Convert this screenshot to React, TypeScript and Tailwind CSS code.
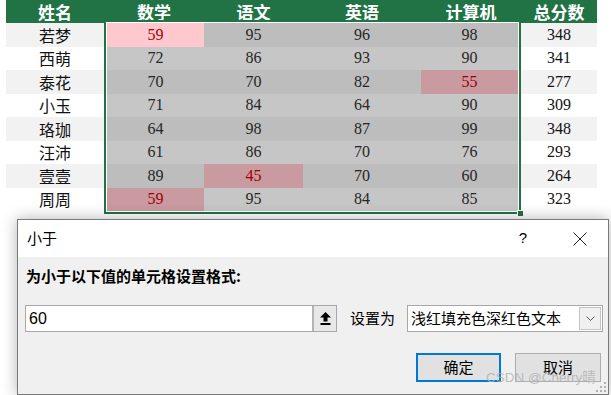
import React from "react";

const cjk = "font-['Noto_Sans_CJK_SC',sans-serif]";
const serif = "font-['Liberation_Serif','Noto_Sans_CJK_SC',serif]";

interface Row {
    name: string;
    scores: number[];
    total: number;
}

const rows: Row[] = [
    { name: "若梦", scores: [59, 95, 96, 98], total: 348 },
    { name: "西萌", scores: [72, 86, 93, 90], total: 341 },
    { name: "泰花", scores: [70, 70, 82, 55], total: 277 },
    { name: "小玉", scores: [71, 84, 64, 90], total: 309 },
    { name: "珞珈", scores: [64, 98, 87, 99], total: 348 },
    { name: "汪沛", scores: [61, 86, 70, 76], total: 293 },
    { name: "壹壹", scores: [89, 45, 70, 60], total: 264 },
    { name: "周周", scores: [59, 95, 84, 85], total: 323 },
];

const colWidths = ["w-[97px]", "w-[99px]", "w-[118px]", "w-[97px]"];

function ScoreCell({ value, col, rowIdx }: { value: number; col: number; rowIdx: number }) {
    const low = value < 60;
    const active = rowIdx === 0 && col === 0;
    let bg = rowIdx % 2 === 0 ? "bg-[#bdbdbd]" : "bg-[#c6c6c6]";
    if (low) bg = active ? "bg-[#ffc7ce]" : "bg-[#c99aa0]";
    return (
        <div
            className={`${colWidths[col]} h-[23.5px] flex items-center justify-center ${bg} ${serif} text-[16px] ${low ? "text-[#9c0006]" : "text-[#262626]"}`}
        >
            {value}
        </div>
    );
}

function Sheet() {
    return (
        <div className="w-[611px] pl-[6px]">
            {/* header */}
            <div className={`flex h-[23px] w-[591px] bg-[#217346] text-white font-bold text-[17px] ${cjk} leading-[23px]`}>
                <div className="w-[98px] text-center">姓名</div>
                <div className="w-[100px] text-center">数学</div>
                <div className="w-[99px] text-center">语文</div>
                <div className="w-[118px] text-center">英语</div>
                <div className="w-[100px] text-center">计算机</div>
                <div className="w-[76px] text-center">总分数</div>
            </div>

            <div className="flex">
                {/* names */}
                <div className={`w-[98px] ${cjk} text-[16px] text-[#111]`}>
                    {rows.map((r, i) => (
                        <div key={r.name} className={`h-[23.5px] flex items-center justify-center ${i % 2 === 0 ? "bg-[#f2f2f2]" : "bg-white"}`}>
                            {r.name}
                        </div>
                    ))}
                </div>

                {/* selected block */}
                <div className="relative -mt-[3px] border-2 border-[#217346]">
                    <div className="border border-white">
                        {rows.map((r, i) => (
                            <div key={r.name} className="flex">
                                {r.scores.map((s, c) => (
                                    <ScoreCell key={c} value={s} col={c} rowIdx={i} />
                                ))}
                            </div>
                        ))}
                    </div>
                    <div className="absolute -right-[5px] -bottom-[5px] w-[7px] h-[7px] bg-[#217346] border border-white" />
                </div>

                {/* totals */}
                <div className={`w-[76px] ${serif} text-[16px] text-[#111]`}>
                    {rows.map((r, i) => (
                        <div key={r.name} className={`h-[23.5px] flex items-center justify-center ${i % 2 === 0 ? "bg-[#f2f2f2]" : "bg-white"}`}>
                            {r.total}
                        </div>
                    ))}
                </div>
            </div>
        </div>
    );
}

function Dialog() {
    return (
        <div className={`relative ml-[17px] mt-[5px] w-[592px] h-[176px] border border-[#7a7a7a] bg-[#f0f0f0] shadow-[0_0_14px_rgba(0,0,0,0.3)] ${cjk} text-black`}>
            {/* title bar */}
            <div className="h-[37px] bg-white flex items-center pl-[9px] pr-[21px]">
                <span className="text-[15px]">小于</span>
                <span className="ml-auto mr-[46px] text-[15px] font-['Liberation_Sans',sans-serif]">?</span>
                <svg width="14" height="14" viewBox="0 0 14 14">
                    <path d="M0.5 0.5 L13.5 13.5 M13.5 0.5 L0.5 13.5" stroke="#222" strokeWidth="1" fill="none" />
                </svg>
            </div>

            <div className="px-[7px]">
                <div className="pt-[9px] pl-px text-[15px] font-bold leading-[20px]">为小于以下值的单元格设置格式:</div>

                <div className="mt-[19px] flex items-center">
                    <div className="flex shrink-0 h-[27px] w-[312px] border border-[#a8a8a8] bg-white">
                        <div className="flex-1 pl-[3px] flex items-center text-[16px] font-['Liberation_Sans',sans-serif]">60</div>
                        <div className="w-[24px] h-full border-l-2 border-[#b4b4b4] bg-[#e8e8e8] flex items-center justify-center">
                            <svg width="11" height="13" viewBox="0 0 11 13">
                                <path d="M5.5 0 L11 5.5 L7.5 5.5 L7.5 9.5 L3.5 9.5 L3.5 5.5 L0 5.5 Z" fill="#000" />
                                <rect x="0.5" y="11" width="10" height="2" fill="#000" />
                            </svg>
                        </div>
                    </div>
                    <span className="ml-[13px] shrink-0 whitespace-nowrap text-[15px]">设置为</span>
                    <div className="ml-[12px] flex shrink-0 h-[27px] w-[196px] border border-[#a8a8a8] bg-white">
                        <div className="flex-1 pl-[3px] flex items-center text-[15px] whitespace-nowrap">浅红填充色深红色文本</div>
                        <div className="w-[22px] my-[1px] mr-[1px] border border-[#c4c4c4] bg-[#f0f0f0] flex items-center justify-center">
                            <svg width="9" height="5" viewBox="0 0 9 5">
                                <path d="M0.5 0.5 L4.5 4.5 L8.5 0.5" stroke="#555" strokeWidth="1" fill="none" />
                            </svg>
                        </div>
                    </div>
                </div>

                <div className="mt-[21px] flex justify-end gap-[14px]">
                    <button className="w-[85px] h-[29px] border-2 border-[#0078d7] bg-[#e1e1e1] text-[15px]">确定</button>
                    <button className="w-[86px] h-[29px] border border-[#adadad] bg-[#e1e1e1] text-[15px]">取消</button>
                </div>
            </div>

            {/* watermark */}
            <div className="absolute left-[468px] top-[150px] text-[13.5px] leading-[16px] text-[#b0b0b0]/80 font-['Liberation_Sans','Noto_Sans_CJK_SC',sans-serif] whitespace-nowrap">
                CSDN @Cherry晴
            </div>

            {/* resize grip */}
            <svg className="absolute right-[2px] bottom-[2px]" width="10" height="10" viewBox="0 0 10 10">
                <rect x="8" y="0" width="2" height="2" fill="#b0b0b0" />
                <rect x="4" y="4" width="2" height="2" fill="#b0b0b0" />
                <rect x="8" y="4" width="2" height="2" fill="#b0b0b0" />
                <rect x="0" y="8" width="2" height="2" fill="#b0b0b0" />
                <rect x="4" y="8" width="2" height="2" fill="#b0b0b0" />
                <rect x="8" y="8" width="2" height="2" fill="#b0b0b0" />
            </svg>
        </div>
    );
}

export default function App() {
    return (
        <div className="w-[611px] h-[395px] bg-white overflow-hidden">
            <Sheet />
            <Dialog />
        </div>
    );
}
